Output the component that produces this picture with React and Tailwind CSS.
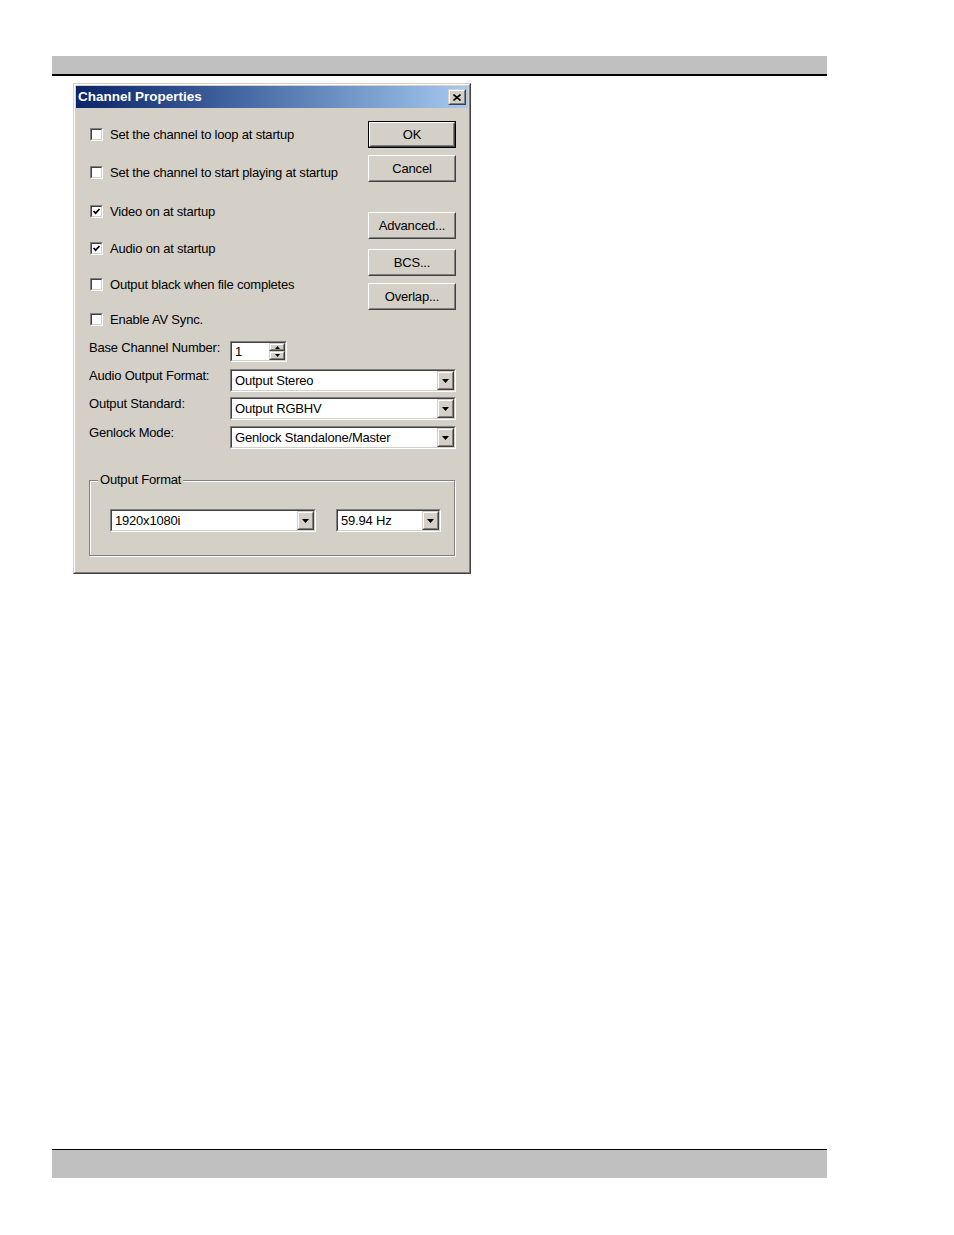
import React from "react";

function Raised({ className = "", children }) {
  return (
    <div className={`border border-t-white border-l-white border-r-[#404040] border-b-[#404040] bg-[#d4d0c8] ${className}`}>
      <div className="h-full w-full border border-t-[#d4d0c8] border-l-[#d4d0c8] border-r-[#808080] border-b-[#808080] flex items-center justify-center">
        {children}
      </div>
    </div>
  );
}

function ScrollBtn({ className = "", children }) {
  return (
    <div className={`border border-t-[#d4d0c8] border-l-[#d4d0c8] border-r-[#404040] border-b-[#404040] bg-[#d4d0c8] ${className}`}>
      <div className="h-full w-full border border-t-white border-l-white border-r-[#808080] border-b-[#808080] flex items-center justify-center">
        {children}
      </div>
    </div>
  );
}

function Sunken({ className = "", children }) {
  return (
    <div className={`shrink-0 border border-t-[#808080] border-l-[#808080] border-r-white border-b-white ${className}`}>
      <div className="h-full w-full border border-t-[#404040] border-l-[#404040] border-r-[#d4d0c8] border-b-[#d4d0c8] bg-white flex">
        {children}
      </div>
    </div>
  );
}

function Btn({ children, def = false, className = "" }) {
  if (def) {
    return (
      <div className={`w-[88px] h-[27px] border border-black ${className}`}>
        <Raised className="h-full w-full">
          <span className="text-[13px] tracking-[-0.2px] leading-none">{children}</span>
        </Raised>
      </div>
    );
  }
  return (
    <Raised className={`w-[88px] h-[27px] ${className}`}>
      <span className="text-[13px] tracking-[-0.2px] leading-none">{children}</span>
    </Raised>
  );
}

function DownArrow() {
  return (
    <svg width="7" height="4" viewBox="0 0 7 4">
      <polygon points="0,0 7,0 3.5,4" fill="#000" />
    </svg>
  );
}

function Combo({ className = "", text }) {
  return (
    <Sunken className={`h-[23px] ${className}`}>
      <div className="flex-1 pl-[3px] text-[13px] tracking-[-0.2px] leading-[19px] whitespace-nowrap overflow-hidden">{text}</div>
      <ScrollBtn className="w-[17px] h-full">
        <DownArrow />
      </ScrollBtn>
    </Sunken>
  );
}

function Check({ checked, label, className = "" }) {
  return (
    <div className={`flex items-center h-[13px] ${className}`}>
      <Sunken className="w-[13px] h-[13px]">
        {checked && (
          <svg width="9" height="9" viewBox="0 0 9 9" className="block">
            <polyline points="1.5,4 3.6,6.2 7.5,2" fill="none" stroke="#000" strokeWidth="1.7" />
          </svg>
        )}
      </Sunken>
      <span className="ml-[7px] text-[13px] tracking-[-0.2px] leading-[13px] whitespace-nowrap">{label}</span>
    </div>
  );
}

function FormRow({ label, children, className = "" }) {
  return (
    <div className={`flex items-start ${className}`}>
      <div className="w-[140px] -ml-[1px] -mt-[1px] text-[13px] tracking-[-0.2px] leading-[16px] whitespace-nowrap">{label}</div>
      <div className="ml-[1px]">{children}</div>
    </div>
  );
}

export default function App() {
  return (
    <div className="w-[954px] h-[1235px] bg-white flex flex-col font-['Liberation_Sans',Arial,sans-serif] text-black overflow-hidden">
      {/* top header bar */}
      <div className="mt-[56px] ml-[52px] w-[775px] h-[20px] bg-[#c0c0c0] border-b-2 border-black" />

      {/* dialog */}
      <div className="mt-[7px] ml-[73px] w-[398px] h-[491px] border border-t-[#d4d0c8] border-l-[#d4d0c8] border-r-[#404040] border-b-[#404040] bg-[#d4d0c8]">
        <div className="h-full border border-t-white border-l-white border-r-[#808080] border-b-[#808080] p-[1px] flex flex-col">
          {/* title bar */}
          <div className="h-[22px] bg-linear-to-r from-[#0a246a] to-[#a6caf0] flex items-center justify-between pl-[2px] pr-[2px]">
            <span className="text-white font-bold text-[13.5px] leading-none whitespace-nowrap">Channel Properties</span>
            <ScrollBtn className="w-[18px] h-[16px]">
              <svg width="8" height="7" viewBox="0 0 8 7">
                <path d="M0.5 0.5 L7.5 6.5 M7.5 0.5 L0.5 6.5" stroke="#000" strokeWidth="1.6" />
              </svg>
            </ScrollBtn>
          </div>

          {/* body */}
          <div className="flex-1 flex flex-col pl-[14px] pr-[12px]">
            <div className="flex justify-between h-[217px]">
              <div className="flex flex-col">
                <Check className="mt-[20px]" label="Set the channel to loop at startup" />
                <Check className="mt-[25px]" label="Set the channel to start playing at startup" />
                <Check className="mt-[26px]" checked label="Video on at startup" />
                <Check className="mt-[24px]" checked label="Audio on at startup" />
                <Check className="mt-[23px]" label="Output black when file completes" />
                <Check className="mt-[22px]" label="Enable AV Sync." />
              </div>
              <div className="flex flex-col w-[88px]">
                <Btn def className="mt-[13px]">OK</Btn>
                <Btn className="mt-[7px]">Cancel</Btn>
                <Btn className="mt-[30px]">Advanced...</Btn>
                <Btn className="mt-[10px]">BCS...</Btn>
                <Btn className="mt-[7px]">Overlap...</Btn>
              </div>
            </div>

            <div className="flex flex-col mt-[16px]">
              <FormRow label="Base Channel Number:">
                <Sunken className="w-[57px] h-[21px]">
                  <div className="flex-1 pl-[3px] text-[13px] leading-[17px]">1</div>
                  <div className="w-[16px] flex flex-col">
                    <ScrollBtn className="h-[8px] w-full">
                      <svg width="5" height="3" viewBox="0 0 5 3">
                        <polygon points="2.5,0 5,3 0,3" fill="#000" />
                      </svg>
                    </ScrollBtn>
                    <ScrollBtn className="h-[9px] w-full">
                      <svg width="5" height="3" viewBox="0 0 5 3">
                        <polygon points="0,0 5,0 2.5,3" fill="#000" />
                      </svg>
                    </ScrollBtn>
                  </div>
                </Sunken>
              </FormRow>
              <FormRow label="Audio Output Format:" className="mt-[7px]">
                <Combo className="w-[226px]" text="Output Stereo" />
              </FormRow>
              <FormRow label="Output Standard:" className="mt-[5px]">
                <Combo className="w-[226px]" text="Output RGBHV" />
              </FormRow>
              <FormRow label="Genlock Mode:" className="mt-[6px]">
                <Combo className="w-[226px]" text="Genlock Standalone/Master" />
              </FormRow>
            </div>

            <fieldset className="mt-[23px] -ml-[1px] mr-[1px] border border-[#808080] shadow-[inset_1px_1px_0_#fff,1px_1px_0_#fff] p-0 m-0 min-w-0">
              <legend className="ml-[8px] px-[2px] bg-[#d4d0c8] text-[13px] tracking-[-0.2px] leading-[16px]">Output Format</legend>
              <div className="flex pl-[20px] mt-[21px] mb-[23px]">
                <Combo className="w-[206px]" text="1920x1080i" />
                <Combo className="w-[105px] ml-[20px]" text="59.94 Hz" />
              </div>
            </fieldset>
          </div>
        </div>
      </div>

      {/* bottom footer bar */}
      <div className="mt-[575px] ml-[52px] w-[775px] h-[29px] bg-[#c0c0c0] border-t border-black" />
    </div>
  );
}
